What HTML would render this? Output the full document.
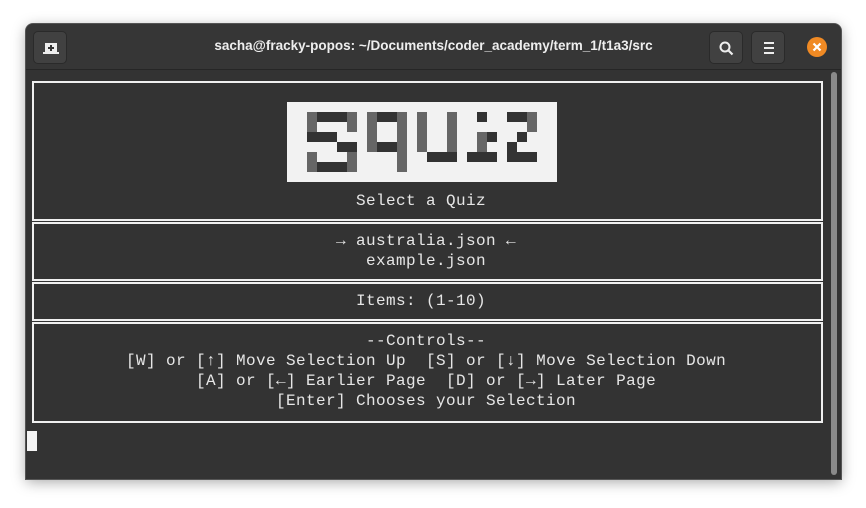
<!DOCTYPE html>
<html><head><meta charset="utf-8"><style>
*{margin:0;padding:0;box-sizing:border-box}
body{width:866px;height:508px;background:#fff;position:relative;overflow:hidden;font-family:"Liberation Mono","DejaVu Sans Mono",monospace}
.win{position:absolute;left:26px;top:24px;width:815px;height:455px;background:#333;border-radius:7px 7px 0 0;box-shadow:0 0 0 1px #555,0 3px 14px rgba(0,0,0,.35);overflow:hidden}
.hdr{position:absolute;left:0;top:0;width:100%;height:46px;background:#363636;border-bottom:1px solid #262626}
.btn{position:absolute;top:7px;width:34px;height:33px;background:#414141;border-radius:5px;border:1px solid #2a2a2a}
.title{position:absolute;left:0;width:100%;top:14px;text-align:center;color:#eee;font:bold 13.5px "Liberation Sans",sans-serif}
.box{position:absolute;left:6px;width:791px;border:2px solid #f0f0f0}
.t{position:absolute;color:#e6e6e6;font-size:16px;letter-spacing:0.4px;line-height:20px;white-space:pre}
.px{position:absolute;width:10px;height:10px}
</style></head><body>
<div class="win">
<div class="hdr">
<div class="btn" style="left:7px"><svg width="34" height="33" viewBox="0 0 34 33"><path d="M11 11h12v9h2v2H9v-2h2z" fill="#eee"/><path d="M17 13v6M14 16h6" stroke="#333" stroke-width="2"/></svg></div>
<div class="title">sacha@fracky-popos: ~/Documents/coder_academy/term_1/t1a3/src</div>
<div class="btn" style="left:683px"><svg width="34" height="33" viewBox="0 0 34 33"><circle cx="15" cy="15" r="4.5" fill="none" stroke="#eee" stroke-width="2"/><path d="M18.5 18.5l4 4" stroke="#eee" stroke-width="2.2"/></svg></div>
<div class="btn" style="left:725px"><svg width="34" height="33" viewBox="0 0 34 33"><path d="M12 11h10M12 16h10M12 21h10" stroke="#eee" stroke-width="2"/></svg></div>
<svg style="position:absolute;left:780px;top:12px" width="22" height="22"><circle cx="11" cy="11" r="10" fill="#f08a24"/><path d="M7.5 7.5l7 7M14.5 7.5l-7 7" stroke="#fff" stroke-width="2.2"/></svg>
</div>
<div class="box" style="top:57px;height:140px"></div>
<div class="box" style="top:198px;height:59px"></div>
<div class="box" style="top:258px;height:39px"></div>
<div class="box" style="top:298px;height:101px"></div>
<div style="position:absolute;left:261px;top:78px;width:270px;height:80px;background:#f2f2f2"></div>
<div id="logo" style="position:absolute;left:281px;top:88px"></div>
<div class="t" style="top:167px;left:330px">Select a Quiz</div>
<div class="t" style="top:207px;left:310px">→ australia.json ←</div>
<div class="t" style="top:227px;left:340px">example.json</div>
<div class="t" style="top:267px;left:330px">Items: (1-10)</div>
<div class="t" style="top:307px;left:340px">--Controls--</div>
<div class="t" style="top:327px;left:100px">[W] or [↑] Move Selection Up  [S] or [↓] Move Selection Down</div>
<div class="t" style="top:347px;left:170px">[A] or [←] Earlier Page  [D] or [→] Later Page</div>
<div class="t" style="top:367px;left:250px">[Enter] Chooses your Selection</div>
<div style="position:absolute;left:1px;top:407px;width:10px;height:20px;background:#f4f4f4"></div>
<div style="position:absolute;left:805px;top:48px;width:6px;height:403px;background:#8a8a8a;border-radius:3px"></div>
</div>
<script>
var D='#333',G='#666',cells=[
[0,0,G],[0,1,G],[1,0,D],[2,0,D],[3,0,D],[4,0,G],[4,1,G],[0,2,D],[1,2,D],[2,2,D],[3,3,D],[4,3,D],[0,4,G],[0,5,G],[4,4,G],[4,5,G],[1,5,D],[2,5,D],[3,5,D],
[6,0,G],[6,1,G],[6,2,G],[6,3,G],[7,0,D],[8,0,D],[7,3,D],[8,3,D],[9,0,G],[9,1,G],[9,2,G],[9,3,G],[9,4,G],[9,5,G],
[11,0,G],[11,1,G],[11,2,G],[11,3,G],[14,0,G],[14,1,G],[14,2,G],[14,3,G],[12,4,D],[13,4,D],[14,4,D],
[17,0,D],[17,2,G],[17,3,G],[18,2,D],[16,4,D],[17,4,D],[18,4,D],
[20,0,D],[21,0,D],[22,0,G],[22,1,G],[21,2,D],[20,3,D],[20,4,D],[21,4,D],[22,4,D]];
var h='';cells.forEach(function(c){h+='<div class="px" style="left:'+c[0]*10+'px;top:'+c[1]*10+'px;background:'+c[2]+'"></div>'});
document.getElementById('logo').innerHTML=h;
</script>
</body></html>
